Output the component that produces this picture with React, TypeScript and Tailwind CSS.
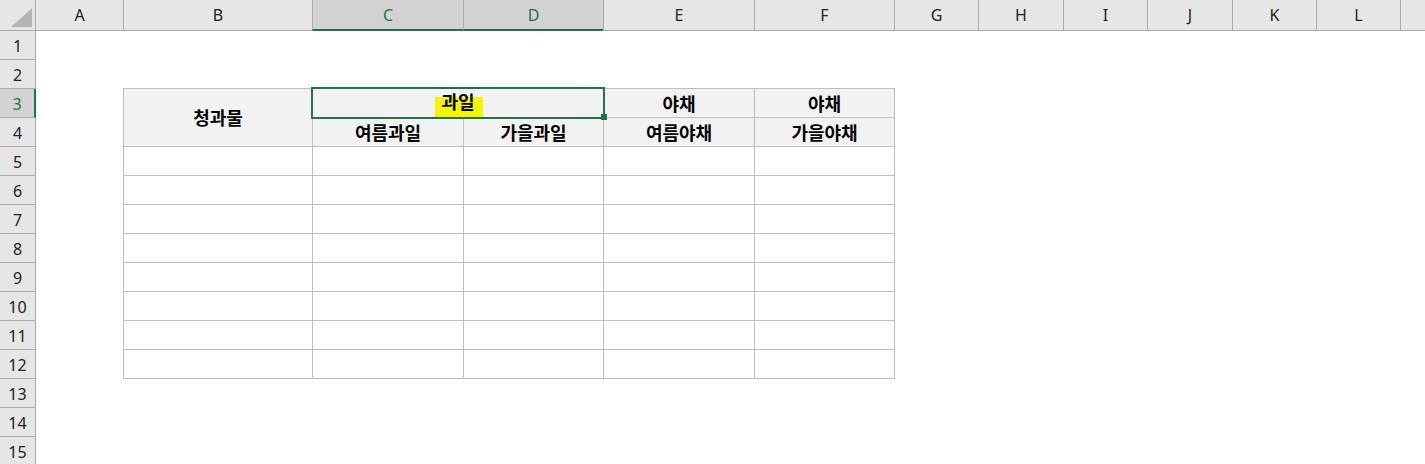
import React from "react";

const cols: { l: string; w: string; sel?: boolean; first?: boolean }[] = [
  { l: "A", w: "w-[87px]", first: true },
  { l: "B", w: "w-[189px]" },
  { l: "C", w: "w-[151px]", sel: true },
  { l: "D", w: "w-[140px]", sel: true },
  { l: "E", w: "w-[151px]" },
  { l: "F", w: "w-[140px]" },
  { l: "G", w: "w-[84px]" },
  { l: "H", w: "w-[85px]" },
  { l: "I", w: "w-[84px]" },
  { l: "J", w: "w-[85px]" },
  { l: "K", w: "w-[84px]" },
  { l: "L", w: "w-[84px]" },
];

const rows = Array.from({ length: 15 }, (_, i) => i + 1);

const hdr =
  "bg-[#f2f2f2] flex items-center justify-center font-bold text-[18px] text-black";

export default function App() {
  return (
    <div className="w-[1425px] h-[464px] overflow-hidden bg-white flex flex-col font-['Noto_Sans',sans-serif] text-[#222]">
      {/* column headers */}
      <div className="flex h-[31px] shrink-0">
        <div className="w-[36px] h-[31px] shrink-0 bg-[#e6e6e6] border-r border-b border-[#ababab] relative">
          <svg className="absolute left-0 top-0" width="35" height="30" viewBox="0 0 35 30">
            <polygon points="32,8 32,27 11,27" fill="#b4b4b4" />
          </svg>
        </div>
        {cols.map((c) => (
          <div
            key={c.l}
            className={
              "h-[31px] shrink-0 flex items-center justify-center text-[16px] " +
              c.w +
              (c.first ? "" : " border-l border-l-[#ababab]") +
              (c.sel
                ? " bg-[#d2d2d2] text-[#217346] border-b-2 border-b-[#217346]"
                : " bg-[#e6e6e6] border-b border-b-[#ababab]")
            }
          >
            {c.l}
          </div>
        ))}
        <div className="flex-1 h-[31px] bg-[#e6e6e6] border-l border-b border-[#ababab]" />
      </div>

      {/* body */}
      <div className="flex flex-1 min-h-0">
        <div className="w-[36px] shrink-0 flex flex-col">
          {rows.map((r) => (
            <div
              key={r}
              className={
                "h-[29px] shrink-0 flex items-center justify-center pt-[2px] text-[16px] border-b border-b-[#ababab] " +
                (r === 3
                  ? "bg-[#d2d2d2] text-[#217346] border-r-2 border-r-[#217346]"
                  : "bg-[#e6e6e6] border-r border-r-[#ababab]")
              }
            >
              {r}
            </div>
          ))}
        </div>

        <div className="flex-1 pl-[87px] pt-[57px] font-['Noto_Sans_CJK_KR',sans-serif]">
          <div className="grid w-max grid-cols-[188px_150px_139px_150px_139px] grid-rows-[repeat(10,28px)] gap-px p-px bg-[#bfbfbf]">
            <div className={hdr + " row-span-2"}>청과물</div>
            <div className={hdr + " col-span-2 relative"}>
              <div className="absolute left-[122px] top-[8px] w-[48px] h-[20px] bg-[#f5f500]" />
              <span className="relative -mt-[4px]">과일</span>
              <div className="absolute -left-[2px] -top-[2px] -right-[2px] -bottom-[2px] border-2 border-[#217346]" />
              <div className="absolute -right-[4px] -bottom-[3px] w-[6px] h-[6px] bg-[#217346]" />
            </div>
            <div className={hdr}>야채</div>
            <div className={hdr}>야채</div>
            <div className={hdr}>여름과일</div>
            <div className={hdr}>가을과일</div>
            <div className={hdr}>여름야채</div>
            <div className={hdr}>가을야채</div>
            {Array.from({ length: 40 }, (_, i) => (
              <div key={i} className="bg-white" />
            ))}
          </div>
        </div>
      </div>
    </div>
  );
}
